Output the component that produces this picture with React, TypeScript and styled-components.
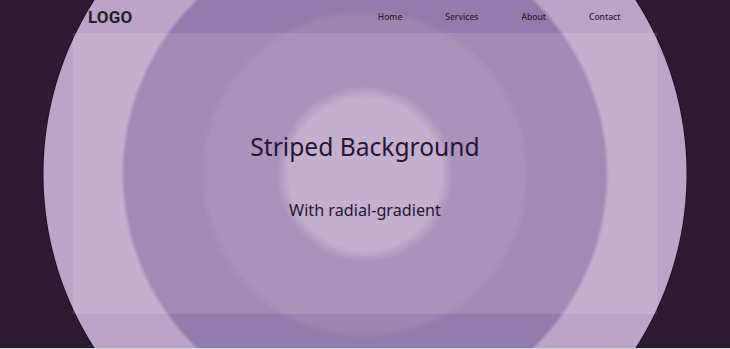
import styled, { createGlobalStyle } from 'styled-components';

const GlobalStyle = createGlobalStyle`
	body {
		margin: 0;
		background: #d6d4d8;
		font-family: 'Noto Sans', 'Open Sans', sans-serif;
	}
`;

const Page = styled.div`
	height: 348px;
	background: radial-gradient(
		circle at 365px 174px,
		#bba4c8 0,
		#bba4c8 76px,
		#9d85b1 88px,
		#9d85b1 158px,
		#937cad 165px,
		#937cad 240px,
		#bba4c8 244px,
		#bba4c8 321px,
		#1e0f22 322px,
		#2f1a34 323px
	);
	overflow: hidden;
`;

const Header = styled.header`
	width: 80%;
	height: 33px;
	margin: 0 auto;
	padding: 0 15px;
	box-sizing: border-box;
	display: flex;
	align-items: center;
	justify-content: space-between;
`;

const Logo = styled.div`
	font-family: 'Roboto', 'Liberation Sans', sans-serif;
	font-weight: 700;
	font-size: 17px;
	letter-spacing: 0.2px;
	color: #2a1c2b;
`;

const Nav = styled.nav`
	display: flex;
`;

const NavLink = styled.a`
	padding: 0 21.5px;
	font-size: 8.5px;
	font-weight: 500;
	color: #2d1a33;
	text-decoration: none;
`;

const Main = styled.main`
	width: 80%;
	height: 281px;
	margin: 0 auto;
	background: rgba(255, 255, 255, 0.12);
	display: flex;
	flex-direction: column;
	align-items: center;
	justify-content: center;
	padding-top: 3px;
	box-sizing: border-box;
	color: #2a1433;
`;

const Title = styled.h1`
	margin: 0;
	font-size: 24.6px;
	font-weight: 400;
`;

const Subtitle = styled.p`
	margin: 36px 0 0;
	font-size: 16.2px;
	font-weight: 400;
`;

const links = ['Home', 'Services', 'About', 'Contact'];

const App = () => {
	return (
		<>
			<GlobalStyle />
			<Page>
				<Header>
					<Logo>LOGO</Logo>
					<Nav>
						{links.map((link) => (
							<NavLink key={link} href="#">
								{link}
							</NavLink>
						))}
					</Nav>
				</Header>
				<Main>
					<Title>Striped Background</Title>
					<Subtitle>With radial-gradient</Subtitle>
				</Main>
			</Page>
		</>
	);
};

export default App;
